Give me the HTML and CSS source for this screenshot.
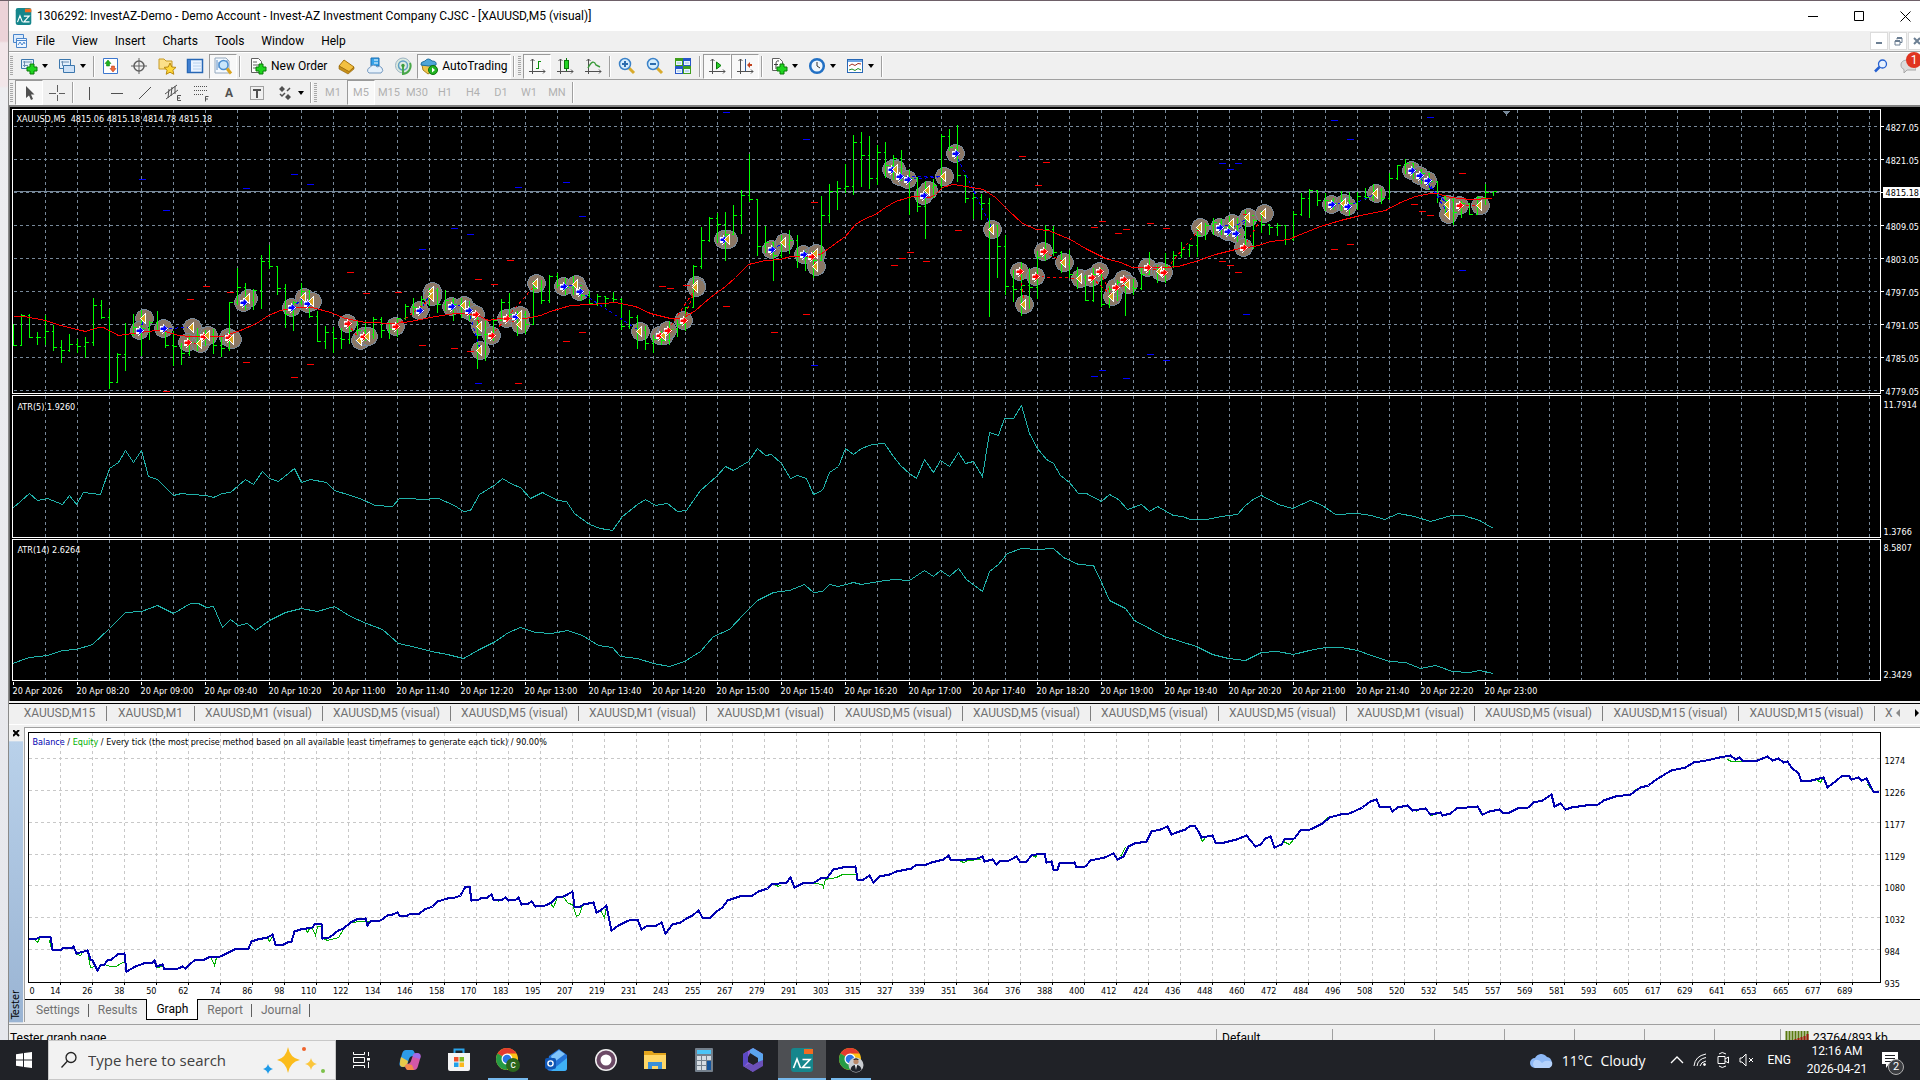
FILE: index.html
```html
<!DOCTYPE html>
<html lang="en">

<head>
    <meta charset="UTF-8">
    <meta name="viewport" content="width=device-width, initial-scale=1.0">
    <title>InvestAZ-Demo - XAUUSD,M5 (visual)</title>
    <link rel="stylesheet" href="styles.css">
</head>

<body>
    <svg class="defs" aria-hidden="true">
        <symbol id="axes" viewBox="0 0 18 18">
            <path d="M4.500 2V17M1 14.500H17M2.500 4L4.500 2L6.500 4M15 12.500L17 14.500L15 16.500" fill="none" stroke="#505050"/>
        </symbol>
        <symbol id="plus" viewBox="0 0 12 12">
            <path d="M4 1H8V4H11V8H8V11H4V8H1V4H4Z" fill="#1fd51f" stroke="#0a7a0a"/>
        </symbol>
        <symbol id="chrome" viewBox="0 0 24 24">
            <circle cx="12" cy="12" r="11" fill="#fbc116"/>
            <path d="M12 12L2.500 6.500A11 11 0 0 1 21.500 6.500H12Z" fill="#e33b2e"/>
            <path d="M2.500 6.500L12 12L12 23A11 11 0 0 1 2.500 6.500Z" fill="#259b45"/>
            <circle cx="12" cy="12" r="5.500" fill="#fff"/>
            <circle cx="12" cy="12" r="4.300" fill="#2a75e6"/>
        </symbol>
        <symbol id="az" viewBox="0 0 24 24">
            <rect x="1" width="22" height="24" rx="3" fill="#16868c"/>
            <rect x="14" y="1" width="9" height="5" fill="#f26b21"/>
            <path d="M3.500 20L7 11L10.500 20M12.500 11.500H20L12.500 19.500H20.500" fill="none" stroke="#fff" stroke-width="1.600"/>
        </symbol>
    </svg>

    <main class="desktop">
        <div class="app">
            <header class="titlebar">
                <svg class="logo" viewBox="0 0 24 24"><use href="#az"/></svg>
                <h1>1306292: InvestAZ-Demo - Demo Account - Invest-AZ Investment Company CJSC - [XAUUSD,M5 (visual)]</h1>
                <div class="win-controls">
                    <button aria-label="Minimize"><svg width="11" height="11"><path d="M0 5.500H10"/></svg></button>
                    <button aria-label="Maximize"><svg width="11" height="11"><path d="M.5.5H9.500V9.500H.5Z"/></svg></button>
                    <button aria-label="Close"><svg width="11" height="11"><path d="M.5.5L10.500 10.500M10.500.5L.5 10.500"/></svg></button>
                </div>
            </header>

            <nav class="menubar">
                <svg width="16" height="16" viewBox="0 0 16 16"><path d="M1.500 1.500H11.500V9.500H1.500Z" fill="#dcebfb" stroke="#4a86cc"/><path d="M4.500 5.500H14.500V14.500H4.500Z" fill="#eef6ff" stroke="#4a86cc"/><path d="M5 7.500H14M6 12L8 9L10 12L12 9L13 11" fill="none" stroke="#4a86cc"/></svg>
                <button>File</button>
                <button>View</button>
                <button>Insert</button>
                <button>Charts</button>
                <button>Tools</button>
                <button>Window</button>
                <button>Help</button>
                <div class="mdi-controls">
                    <button aria-label="Minimize chart"><svg width="8" height="8"><path d="M1 6H7" stroke-width="2"/></svg></button>
                    <button aria-label="Restore chart"><svg width="9" height="9"><path d="M3 2.500V1H8V5.500H6M1 4H6V8H1Z" stroke-width="1"/><path d="M3 1H8M1 4H6" stroke-width="2"/></svg></button>
                    <button aria-label="Close chart"><svg width="8" height="8"><path d="M1 1L7 7M7 1L1 7" stroke-width="2"/></svg></button>
                </div>
            </nav>

            <div class="toolbars">
                <div class="toolbar">
                    <i class="grip"></i>
                    <button class="drop" aria-label="New chart"><svg width="18" height="18" viewBox="0 0 18 18"><path d="M1.500 2.500H13.500V11.500H1.500Z" fill="#e4effb" stroke="#3c77ad"/><path d="M3 5H12M4.500 4V10M3 8.500H8" stroke="#6b8fb3"/><use href="#plus" x="6" y="6" width="12" height="12"/></svg></button>
                    <button class="drop" aria-label="Profiles"><svg width="18" height="18" viewBox="0 0 18 18"><path d="M1.500 2.500H12.500V11.500H1.500Z" fill="#e4effb" stroke="#3c77ad"/><path d="M5.500 8.500H16.500V15.500H5.500Z" fill="#cfe2f7" stroke="#3c77ad"/><path d="M3 5H11M4.500 4V9" stroke="#6b8fb3"/></svg></button>
                    <i class="sep"></i>
                    <button aria-label="Market Watch"><svg width="18" height="18" viewBox="0 0 18 18"><path d="M1.500 1.500H15.500V16.500H1.500Z" fill="#fff" stroke="#3c77cf"/><path d="M6 3L9 6.500H7.500V9H4.500V6.500H3Z" fill="#1fb31f" stroke="#0a7a0a" stroke-width=".5"/><path d="M11 15L14 11.500H12.500V9H9.500V11.500H8Z" fill="#f26b3a" stroke="#b03010" stroke-width=".5"/></svg></button>
                    <button aria-label="Data Window"><svg width="18" height="18" viewBox="0 0 18 18" fill="none" stroke="#606060"><circle cx="9" cy="9" r="5" stroke-width="1.500"/><path d="M9 1V17M1 9H17"/></svg></button>
                    <button aria-label="Navigator"><svg width="18" height="18" viewBox="0 0 18 18"><path d="M1 2H6L8 4H14V12H1Z" fill="#fbe08a" stroke="#c79a27"/><path d="M12 6L13.800 10L18 10.400L14.900 13.200L15.800 17.300L12 15.200L8.200 17.300L9.100 13.200L6 10.400L10.200 10Z" fill="#ffd83c" stroke="#b98a10"/></svg></button>
                    <button aria-label="Terminal"><svg width="18" height="18" viewBox="0 0 18 18"><rect x="1.500" y="2.500" width="15" height="13" fill="#eaf3ff" stroke="#2767b5" stroke-width="1.500"/><rect x="2" y="3" width="3" height="12" fill="#3f7fd0"/><path d="M7 6H15M7 9H15M7 12H15" stroke="#b8d2ee"/></svg></button>
                    <button class="pressed" aria-label="Strategy Tester"><svg width="20" height="20" viewBox="0 0 20 20"><path d="M2 2H13L16 5V17H2Z" fill="#f5faff" stroke="#94a8bd"/><path d="M4 4V14M6 6V12M14 4V9" stroke="#5d8ec4"/><circle cx="10.500" cy="9" r="4.500" fill="#c9e6fb" stroke="#4b8ed0" stroke-width="1.500"/><path d="M14 12.500L18 17.500" stroke="#d9a420" stroke-width="3"/></svg></button>
                    <i class="sep"></i>
                    <button class="label"><svg width="18" height="18" viewBox="0 0 18 18"><path d="M2.500 1.500H9.500L12.500 4.500V15.500H2.500Z" fill="#fff" stroke="#606060"/><path d="M4 5H8M4 8H10M4 11H8" stroke="#606060"/><use href="#plus" x="6" y="6" width="12" height="12"/></svg>New Order</button>
                    <button aria-label="MetaEditor"><svg width="18" height="18" viewBox="0 0 18 18"><path d="M6 3L16 10L11 15L1 9Z" fill="#f3c040" stroke="#a8740c"/><path d="M1 9V12L10 17L16 12V10L11 14.500Z" fill="#c8901a" stroke="#8f620a" stroke-width=".6"/></svg></button>
                    <button aria-label="MetaQuotes Cloud"><svg width="18" height="18" viewBox="0 0 18 18"><path d="M5 1H13V9H5Z" fill="#35a2e8" stroke="#1b6fb4"/><path d="M8 3H12M8 6H12" stroke="#fff"/><path d="M3 16A3 3 0 0 1 4 10.500A4 4 0 0 1 11 10A3 3 0 0 1 15 16Z" fill="#e6f1fb" stroke="#7599c0"/></svg></button>
                    <button aria-label="Signals"><svg width="18" height="18" viewBox="0 0 18 18" fill="none"><circle cx="9" cy="8.500" r="7.500" fill="#dceadf" stroke="#9cb3c4"/><circle cx="9" cy="8.500" r="4.500" stroke="#5f9fc4" stroke-width="1.500"/><path d="M9 8.500V17A8 8 0 0 0 16 6" stroke="#48a848" stroke-width="2"/><circle cx="9" cy="8.500" r="1.700" fill="#3b9a3b"/></svg></button>
                    <button class="label pressed"><svg width="18" height="18" viewBox="0 0 18 18"><path d="M2 8H15L13 14L8 17L3 13Z" fill="#f0c44c" stroke="#a8801c"/><path d="M1 8Q0 5 5 4Q8 0 12 4Q17 4 16 8Q9 10 1 8Z" fill="#4fa6d8" stroke="#21709f"/><circle cx="13" cy="13" r="4.500" fill="#21b321" stroke="#0d730d"/><path d="M12 10.500L15 13L12 15.500Z" fill="#fff"/></svg>AutoTrading</button>
                    <i class="sep"></i>
                    <i class="grip"></i>
                    <button class="pressed" aria-label="Bar chart"><svg width="18" height="18" viewBox="0 0 18 18"><use href="#axes"/><path d="M10.500 4V12M8 11.500H10M11 4.500H13" stroke="#0a8f0a"/></svg></button>
                    <button aria-label="Candlesticks"><svg width="18" height="18" viewBox="0 0 18 18"><use href="#axes"/><path d="M10.500 1V14" stroke="#0a7a0a"/><rect x="8.500" y="3.500" width="4" height="8" fill="#23d323" stroke="#0a7a0a"/></svg></button>
                    <button aria-label="Line chart"><svg width="18" height="18" viewBox="0 0 18 18"><use href="#axes"/><path d="M4 11Q9 1 12 8L16 10" fill="none" stroke="#3a9a3a" stroke-width="1.400"/></svg></button>
                    <i class="sep"></i>
                    <button aria-label="Zoom in"><svg width="18" height="18" viewBox="0 0 18 18"><path d="M11 11L16 16" stroke="#d9ab2c" stroke-width="3"/><circle cx="7" cy="7" r="5.500" fill="#d5edfd" stroke="#3b82c8" stroke-width="1.500"/><path d="M4 7H10M7 4V10" stroke="#2c6daf" stroke-width="2"/></svg></button>
                    <button aria-label="Zoom out"><svg width="18" height="18" viewBox="0 0 18 18"><path d="M11 11L16 16" stroke="#d9ab2c" stroke-width="3"/><circle cx="7" cy="7" r="5.500" fill="#d5edfd" stroke="#3b82c8" stroke-width="1.500"/><path d="M4 7H10" stroke="#2c6daf" stroke-width="2"/></svg></button>
                    <button aria-label="Tile windows"><svg width="18" height="18" viewBox="0 0 18 18"><path d="M1 1H9V9H1ZM9 9H17V17H9Z" fill="#3f9e1c"/><path d="M9 1H17V9H9ZM1 9H9V17H1Z" fill="#2656c8"/><path d="M2 4H8V8H2ZM10 4H16V8H10ZM2 12H8V16H2ZM10 12H16V16H10Z" fill="#eaf4ff"/><path d="M3 6H7M11 6H15M3 14H7M11 14H15" stroke="#9bbde0"/></svg></button>
                    <i class="sep"></i>
                    <button class="pressed" aria-label="Auto scroll"><svg width="18" height="18" viewBox="0 0 18 18"><use href="#axes"/><path d="M8.500 5V12L13 8.500Z" fill="#2bd02b" stroke="#0a7a0a"/></svg></button>
                    <button class="pressed" aria-label="Chart shift"><svg width="18" height="18" viewBox="0 0 18 18"><use href="#axes"/><path d="M9.500 2V14" stroke="#2c5d9f"/><path d="M11 8L14 5V7H16V9H14V11Z" fill="#c0401c"/></svg></button>
                    <i class="sep"></i>
                    <button class="drop" aria-label="Indicators"><svg width="18" height="18" viewBox="0 0 18 18"><path d="M2.500 1.500H9.500L12.500 4.500V13.500H2.500Z" fill="#fff" stroke="#606060"/><path d="M9 4Q6 3 6 7V12M4 7.500H8" fill="none" stroke="#404040"/><use href="#plus" x="6" y="6" width="12" height="12"/></svg></button>
                    <button class="drop" aria-label="Periods"><svg width="18" height="18" viewBox="0 0 18 18"><circle cx="9" cy="9" r="6.800" fill="#eef6fd" stroke="#2270c4" stroke-width="2.500"/><path d="M9 5V9L12 11" fill="none" stroke="#333"/></svg></button>
                    <button class="drop" aria-label="Templates"><svg width="18" height="18" viewBox="0 0 18 18"><rect x="1.500" y="2.500" width="15" height="13" fill="#fff" stroke="#2767b5"/><path d="M2 4H16" stroke="#6ea6e4" stroke-width="2"/><path d="M3 9L6 7L9 8.500L12 6.500L15 7" fill="none" stroke="#a03020"/><path d="M3 13L6 12L9 13.500L12 11.500L15 13" fill="none" stroke="#1f8f1f"/></svg></button>
                    <i class="sep"></i>
                    <div class="right-tools">
                        <button aria-label="Search"><svg width="14" height="14" viewBox="0 0 14 14"><circle cx="8.500" cy="5" r="4" fill="#e8f2ff" stroke="#2560d0" stroke-width="1.300"/><path d="M5.500 8L1 12.500" stroke="#2560d0" stroke-width="2.500"/></svg></button>
                        <button class="chat" aria-label="Messages"><svg width="16" height="16" viewBox="0 0 16 16"><path d="M8 2C3 2 1 4 1 7C1 9 2 10.500 4 11.500V15L7 12H16V2Z" fill="#dcdcdc" stroke="#a8a8a8"/></svg><span class="badge">1</span></button>
                    </div>
                </div>
                <div class="toolbar second">
                    <i class="grip"></i>
                    <button class="pressed" aria-label="Cursor"><svg width="18" height="18" viewBox="0 0 18 18"><path d="M6 2V14L9 11.500L11 16L13 15L11 10.500H14.500Z" fill="#505050"/></svg></button>
                    <button aria-label="Crosshair"><svg width="18" height="18" viewBox="0 0 18 18" stroke="#606060"><path d="M9.500 1V8M9.500 11V17M1 9.500H8M11 9.500H17"/></svg></button>
                    <i class="sep"></i>
                    <button aria-label="Vertical line"><svg width="18" height="18" viewBox="0 0 18 18"><path d="M9.500 3V16" stroke="#505050"/></svg></button>
                    <button aria-label="Horizontal line"><svg width="18" height="18" viewBox="0 0 18 18"><path d="M3 9.500H15" stroke="#505050"/></svg></button>
                    <button aria-label="Trendline"><svg width="18" height="18" viewBox="0 0 18 18"><path d="M3 15L15 3" stroke="#505050"/></svg></button>
                    <button aria-label="Channel"><svg width="18" height="18" viewBox="0 0 18 18" fill="none" stroke="#505050"><path d="M1 10L13 1M2 15L14 6M5 5L4 14M8 3L7 12M11 2V10"/><path d="M17 11.500H13.500V16.500H17M14 14H16"/></svg></button>
                    <button aria-label="Fibonacci"><svg width="18" height="18" viewBox="0 0 18 18" fill="none" stroke="#505050"><path d="M2 2.500H16M2 6.500H16M2 10.500H12" stroke-dasharray="1 1"/><path d="M16.500 12.500H13.500V17.500M14 15H16"/></svg></button>
                    <button class="glyph">A</button>
                    <button aria-label="Text label"><svg width="18" height="18" viewBox="0 0 18 18" fill="none" stroke="#505050"><path d="M2.500 2.500H15.500V15.500H2.500Z" stroke-dasharray="1 1"/><path d="M5 6H13M9 6V14" stroke-width="2"/></svg></button>
                    <button class="drop" aria-label="Arrows"><svg width="18" height="18" viewBox="0 0 18 18" fill="#505050"><path d="M6 2L9 5L6 8L3 5ZM12 10L15 13L12 16L9 13Z"/><path d="M11 7L14 4M4 10L6 12L9 9" fill="none" stroke="#505050" stroke-width="1.500"/></svg></button>
                    <i class="sep"></i>
                    <i class="grip"></i>
                    <button class="period">M1</button>
                    <button class="period pressed">M5</button>
                    <button class="period">M15</button>
                    <button class="period">M30</button>
                    <button class="period">H1</button>
                    <button class="period">H4</button>
                    <button class="period">D1</button>
                    <button class="period">W1</button>
                    <button class="period">MN</button>
                    <i class="sep"></i>
                </div>
            </div>

            <section class="chart"><svg id="priceChart"></svg></section>

            <nav class="chart-tabs">
                <button class="first">XAUUSD,M15</button>
                <button class="short">XAUUSD,M1</button>
                <button>XAUUSD,M1 (visual)</button>
                <button>XAUUSD,M5 (visual)</button>
                <button>XAUUSD,M5 (visual)</button>
                <button>XAUUSD,M1 (visual)</button>
                <button>XAUUSD,M1 (visual)</button>
                <button>XAUUSD,M5 (visual)</button>
                <button>XAUUSD,M5 (visual)</button>
                <button>XAUUSD,M5 (visual)</button>
                <button>XAUUSD,M5 (visual)</button>
                <button>XAUUSD,M1 (visual)</button>
                <button>XAUUSD,M5 (visual)</button>
                <button class="long">XAUUSD,M15 (visual)</button>
                <button class="long">XAUUSD,M15 (visual)</button>
                <button class="cut">X</button>
                <span class="scroll">
                    <svg width="5" height="8"><path d="M4 0L0 4L4 8Z" fill="#8a8a8a"/></svg>
                    <svg width="5" height="8"><path d="M0 0L4 4L0 8Z"/></svg>
                </span>
            </nav>

            <section class="tester">
                <aside>
                    <button class="close" aria-label="Close tester"><svg width="7" height="7"><path d="M0 0L6 6M6 0L0 6" stroke="#000" stroke-width="2"/></svg></button>
                    <span class="caption">Tester</span>
                </aside>
                <div class="tester-body">
                    <svg id="testerChart"></svg>
                    <nav class="tester-tabs">
                        <button>Settings</button>
                        <button>Results</button>
                        <button class="active">Graph</button>
                        <button>Report</button>
                        <button>Journal</button>
                    </nav>
                </div>
            </section>

            <footer class="statusbar">
                <span class="message">Tester graph page</span>
                <span class="profile">Default</span>
                <span class="c102"></span>
                <span class="c70"></span>
                <span class="c70"></span>
                <span class="c70"></span>
                <span class="c70"></span>
                <span class="c66"></span>
                <span class="traffic"><svg width="24" height="14"><path d="M1.500 0V14M4.500 0V14M7.500 0V14M10.500 0V14M13.500 0V14M16.500 0V14M19.500 0V14M22.500 0V14" stroke="#5a7a10" stroke-width="2"/><path d="M7.500 9V14M10.500 8V14M13.500 7V14M16.500 6V14M19.500 5V14M22.500 3V14" stroke="#a01a10" stroke-width="2"/></svg>23764/893 kb</span>
            </footer>
        </div>
    </main>

    <footer class="taskbar">
        <button class="start" aria-label="Start"><svg width="16" height="16"><path d="M0 2.300L7 1.300V7.500H0ZM8 1.100L16 0V7.500H8ZM0 8.500H7V14.700L0 13.700ZM8 8.500H16V16L8 14.900Z" fill="#fff"/></svg></button>
        <label class="search">
            <svg width="18" height="18" viewBox="0 0 18 18" fill="none" stroke="#222" stroke-width="1.300"><circle cx="11" cy="6.500" r="5"/><path d="M7.500 10L1.500 16.500"/></svg>
            <input type="text" placeholder="Type here to search" aria-label="Search">
            <svg width="62" height="28" viewBox="0 0 62 28"><path d="M25 1Q27 12 37 14Q27 16 25 27Q23 16 14 14Q23 12 25 1Z" fill="#fbbc1c"/><path d="M48 12Q49 17 54 18Q49 19 48 24Q47 19 42 18Q47 17 48 12Z" fill="#fbc63c"/><path d="M5 18Q6 22 10 23Q6 24 5 28Q4 24 0 23Q4 22 5 18Z" fill="#1f9be8"/><circle cx="41" cy="3" r="2" fill="#f0642c"/><circle cx="60" cy="25" r="2" fill="#7cc14a"/></svg>
        </label>
        <nav class="apps">
            <button aria-label="Task View"><svg width="18" height="18" viewBox="0 0 18 18" fill="none" stroke="#fff"><path d="M1.500 1V3.500H12.500V1M1.500 17V14.500H12.500V17M1.500 6.500H12.500V11.500H1.500ZM16.500 1V5M16.500 11V17"/><path d="M15 7H18V9.500H15Z" fill="#fff" stroke="none"/></svg></button>
            <button aria-label="Copilot"><svg width="24" height="24" viewBox="0 0 24 24"><path d="M8 2H14Q16 2 17 6L15 8Q12 8 11 11L9 17Q8 19 5 19Q0 19 2 13L4 6Q5 2 8 2Z" fill="#2c9be8"/><path d="M3 9L10 13L9 17Q8 19 5 19Q0 19 3 9Z" fill="#e8c94a"/><path d="M16 22H10Q8 22 7 18L9 16Q12 16 13 13L15 7Q16 5 19 5Q24 5 22 11L20 18Q19 22 16 22Z" fill="#d457a8"/><path d="M16 22H10Q8 22 7 18L9 16L14 17Z" fill="#f58a4c"/><path d="M15 7Q16 5 19 5Q24 5 22 11L15 9Z" fill="#a06be8"/></svg></button>
            <button aria-label="Store"><svg width="24" height="24" viewBox="0 0 24 24"><path d="M7.500 6V1.500H16.500V6" fill="none" stroke="#2ba4ea" stroke-width="2"/><path d="M1 5H23V21Q23 23 21 23H3Q1 23 1 21Z" fill="#f4f4f4"/><path d="M7 9H11.500V13.500H7Z" fill="#f0512a"/><path d="M12.500 9H17V13.500H12.500Z" fill="#7fba25"/><path d="M7 14.500H11.500V19H7Z" fill="#22a0e8"/><path d="M12.500 14.500H17V19H12.500Z" fill="#fbb81c"/></svg></button>
            <button class="open" aria-label="Chrome"><svg width="26" height="26" viewBox="0 0 26 26"><use href="#chrome" width="24" height="24"/><circle cx="18" cy="18" r="7" fill="#2c661d"/><text x="18" y="21">c</text></svg></button>
            <button aria-label="Outlook"><svg width="24" height="24" viewBox="0 0 24 24"><path d="M4 8L14 1L22 7V20Q22 23 19 23H6Q2 23 2 20Z" fill="#2374d8"/><path d="M6 8L14 2L20 6L8 15Z" fill="#7fc4fa"/><path d="M6 23L22 10V20Q22 23 19 23Z" fill="#3fb1f5"/><rect y="10" width="11" height="11" rx="2" fill="#0f56b5"/><circle cx="5.500" cy="15.500" r="2.600" fill="none" stroke="#fff" stroke-width="1.400"/></svg></button>
            <button aria-label="Recorder"><svg width="24" height="24" viewBox="0 0 24 24"><circle cx="12" cy="12" r="11" fill="#f2f2f2"/><circle cx="12" cy="12" r="7.500" fill="#fff" stroke="#6c4a66" stroke-width="4"/></svg></button>
            <button aria-label="File Explorer"><svg width="24" height="24" viewBox="0 0 24 24"><path d="M1 3H9L11 5H23V21H1Z" fill="#e3a51c"/><path d="M1 7H23V21H1Z" fill="#ffd766"/><path d="M5 21V14H19V21H15V18H9V21Z" fill="#3a8fd9"/></svg></button>
            <button aria-label="Calculator"><svg width="24" height="24" viewBox="0 0 24 24"><rect x="3" width="18" height="24" rx="1" fill="#74808c"/><rect x="5" y="2" width="14" height="4" fill="#4cc4f5"/><path d="M5 8H9V12H5ZM10 8H14V12H10ZM15 8H19V12H15ZM5 13H9V17H5ZM10 13H14V17H10ZM5 18H9V22H5ZM10 18H14V22H10Z" fill="#d6dde3"/><path d="M15 13H19V22H15Z" fill="#15559c"/></svg></button>
            <button aria-label="Microsoft 365"><svg width="24" height="24" viewBox="0 0 24 24"><path d="M12 0L22 6V12L12 6.500V0L2 6V18L12 24L12 17L7 14V9Z" fill="#8c62d8"/><path d="M12 0L22 6V17L17 14V10L9 5V2Z" fill="#5ba5ee"/><path d="M22 12V18L12 24L3 18.500L8 15.500L12 17L17 14Z" fill="#6b50b8"/><path d="M2 6L7 3V14L3 18.500L2 18Z" fill="#5a48c4"/></svg></button>
            <button class="open current" aria-label="InvestAZ"><svg width="24" height="24"><use href="#az"/></svg></button>
            <button class="open" aria-label="Chrome profile"><svg width="26" height="26" viewBox="0 0 26 26"><use href="#chrome" width="24" height="24"/><circle cx="18" cy="18" r="7.500" fill="#c9ccd0"/><circle cx="18" cy="14.500" r="2.600" fill="#b98868"/><path d="M15 13Q18 9.500 21 13L20 13Q18 12 16 13Z" fill="#1c1c1c"/><path d="M12.500 23Q13 18 18 18Q23 18 23.500 23Q18 27 12.500 23Z" fill="#20242c"/><path d="M17 18H19L18 23Z" fill="#fff"/></svg></button>
        </nav>
        <div class="tray">
            <button class="weather"><svg width="24" height="18" viewBox="0 0 24 18"><path d="M5 17A5 5 0 0 1 5 7A7 7 0 0 1 17 6A6 6 0 0 1 19 17Z" fill="#8db8f5"/><path d="M5 17A5 5 0 0 1 5 9Q9 8 12 12Q16 8 22 11A5 5 0 0 1 19 17Z" fill="#b5d2fb"/></svg><span>11°C</span><span>Cloudy</span></button>
            <button aria-label="Show hidden icons"><svg width="14" height="8"><path d="M1 7L7 1L13 7" fill="none" stroke="#fff" stroke-width="1.300"/></svg></button>
            <button aria-label="Network"><svg width="14" height="14" viewBox="0 0 14 14" fill="none" stroke="#fff"><path d="M1 13Q2 3 13 1M4 13Q5 6 13 4.500M7 13Q8 9 13 8"/><circle cx="11.500" cy="11.500" r="1" fill="#fff"/></svg></button>
            <button aria-label="Camera"><svg width="14" height="18" viewBox="0 0 14 18" fill="none" stroke="#fff"><path d="M3 3Q6 0 10 3M3 15Q6 18 10 15M2 5.500H9V12.500H2ZM9 8L12.500 6V12L9 10"/></svg></button>
            <button aria-label="Volume muted"><svg width="16" height="14" viewBox="0 0 16 14" fill="none" stroke="#fff"><path d="M1 5H3L7 1V13L3 9H1ZM10 5L14 9M14 5L10 9"/></svg></button>
            <button class="lang">ENG</button>
            <button class="clock"><span>12:16 AM</span><span>2026-04-21</span></button>
            <button class="notes" aria-label="Notifications"><svg width="18" height="18" viewBox="0 0 18 18"><path d="M1 1H17V13H8L5 17V13H1Z" fill="#fff"/><path d="M4 4.500H14M4 7.500H14M4 10.500H10" stroke="#202227"/></svg><span class="count">2</span></button>
        </div>
    </footer>

    <script src="script.js"></script>
</body>

</html>
```
FILE: styles.css
```css
* {
    box-sizing: border-box;
}

body {
    margin: 0;
    height: 100vh;
    display: flex;
    flex-direction: column;
    overflow: hidden;
    font-family: "Roboto", "Open Sans", sans-serif;
    font-size: 12px;
    color: #000;
    background: #e9e9ed;
}

button {
    font: inherit;
    color: inherit;
    background: none;
    border: 0;
    padding: 0;
    white-space: nowrap;
}

svg {
    display: block;
    flex: none;
}

.defs {
    position: absolute;
    width: 0;
    height: 0;
}

.desktop {
    flex: 1;
    min-height: 0;
    display: flex;
    padding-left: 8px;
    overflow: hidden;
    border-top: 1px solid #6e6068;
    background: linear-gradient(#ecd3d8 0, #ecd3d8 40px, #f2e6e9 42px, #f2e6e9 85px, #ededf0 87px, #e6e7ec 100%);
}

.app {
    flex: 1;
    min-width: 0;
    height: calc(100vh - 31px);
    display: flex;
    flex-direction: column;
    overflow: hidden;
    background: #f0f0f0;
    border-left: 1px solid #8a8a8a;
}

/* title and menu */
.titlebar {
    height: 30px;
    flex: none;
    display: flex;
    align-items: center;
    background: #fff;
    padding-left: 6px;
}

.logo {
    width: 17px;
    height: 17px;
}

.titlebar h1 {
    flex: 1;
    margin: 0 0 0 5px;
    font-size: 12px;
    font-weight: normal;
}

.win-controls {
    display: flex;
    margin-right: -8px;
}

.win-controls button {
    width: 46px;
    height: 30px;
    display: flex;
    align-items: center;
    justify-content: center;
}

.win-controls path {
    fill: none;
    stroke: #000;
}

.menubar {
    height: 20px;
    flex: none;
    display: flex;
    align-items: center;
    padding-left: 3px;
}

.menubar > button {
    padding: 0 9px 0 8px;
}

.mdi-controls {
    margin-left: auto;
    margin-right: -6px;
    display: flex;
    gap: 1px;
}

.mdi-controls button {
    width: 18px;
    height: 18px;
    display: flex;
    align-items: center;
    justify-content: center;
    background: #fff;
    border: 1px solid #dcdcdc;
}

.mdi-controls path {
    fill: none;
    stroke: #6c7f93;
}

/* toolbars */
.toolbars {
    flex: none;
    border-top: 1px solid #a0a0a0;
}

.toolbar {
    height: 27px;
    display: flex;
    align-items: center;
    border-top: 1px solid #fff;
}

.toolbar.second {
    height: 26px;
    border-top-color: #a0a0a0;
}

.toolbar > button {
    width: 28px;
    height: 25px;
    display: flex;
    align-items: center;
    justify-content: center;
}

.toolbar > button.drop {
    width: 38px;
    gap: 4px;
}

.toolbar > button.drop::after {
    content: "";
    border: 3px solid transparent;
    border-top: 4px solid #000;
    border-bottom: 0;
}

.toolbar > button.label {
    width: auto;
    gap: 4px;
    padding: 0 6px;
}

.toolbar > button.pressed {
    border: 1px solid #fff;
    border-top-color: #9a9a9a;
    border-left-color: #9a9a9a;
    background: #f8f8f8;
}

.toolbar > button.label.pressed {
    padding: 0 2px;
}

.toolbar > button.period {
    color: #b0b0b0;
    font-size: 11px;
}

.toolbar > button.glyph {
    color: #505050;
    font-weight: bold;
}

.grip {
    width: 3px;
    height: 20px;
    margin: 0 2px 0 1px;
    background: repeating-linear-gradient(#a8a8a8 0 1px, #f0f0f0 1px 2px);
}

.sep {
    width: 2px;
    height: 21px;
    margin: 0 2px;
    border-left: 1px solid #a0a0a0;
    border-right: 1px solid #fff;
}

.second .sep {
    margin: 0 1px;
}

.right-tools {
    margin-left: auto;
    display: flex;
    gap: 12px;
}

.chat {
    position: relative;
    width: 20px;
}

.badge {
    position: absolute;
    left: 6px;
    top: -6px;
    width: 16px;
    height: 16px;
    line-height: 16px;
    border-radius: 8px;
    background: #e03420;
    color: #fff;
    text-align: center;
}

/* price chart */
.chart {
    flex: 595 1 0;
    min-height: 0;
    border-left: 1px solid #696969;
    border-top: 2px solid #808080;
    background: #000;
}

.chart svg {
    width: 100%;
    height: 100%;
}

.chart text,
.tester text {
    font-family: "DejaVu Sans Condensed", "DejaVu Sans", sans-serif;
    font-size: 9px;
}

.chart text {
    fill: #fff;
}

.chart .on-white {
    fill: #000;
}

.chart-tabs {
    height: 22px;
    flex: none;
    display: flex;
    overflow: hidden;
    padding: 2px 0 3px;
    margin-top: 2px;
    border-top: 1px solid #000;
    border-bottom: 1px solid #fff;
    color: #707070;
}

.chart-tabs button {
    width: 128px;
    flex: none;
    line-height: 14px;
    border-right: 1px solid #808080;
}

.chart-tabs .first {
    width: 98px;
    padding-left: 4px;
}

.chart-tabs .short {
    width: 88px;
}

.chart-tabs .long {
    width: 136px;
}

.chart-tabs .cut {
    width: 20px;
    border: 0;
    padding-left: 10px;
    text-align: left;
}

.scroll {
    margin-left: auto;
    display: flex;
    align-items: center;
    gap: 14px;
}

/* tester */
.tester {
    flex: 296 1 0;
    min-height: 0;
    display: flex;
    margin-top: 2px;
}

.tester aside {
    width: 15px;
    flex: none;
    display: flex;
    flex-direction: column;
}

.close {
    height: 14px;
    display: flex;
    align-items: center;
    justify-content: center;
}

.caption {
    flex: 1;
    margin-right: 1px;
    writing-mode: vertical-rl;
    transform: rotate(180deg);
    line-height: 14px;
    padding-top: 3px;
    font-family: "DejaVu Sans Condensed", "DejaVu Sans", sans-serif;
    font-size: 11px;
    background: linear-gradient(#9ab4d3, #b9d1ea);
}

.tester-body {
    flex: 1;
    min-width: 0;
    display: flex;
    flex-direction: column;
    border-top: 1px solid #a0a0a0;
    border-left: 1px solid #a0a0a0;
}

.tester-body svg {
    flex: 1;
    width: 100%;
    min-height: 0;
    background: #fff;
}

.tester-tabs {
    height: 23px;
    flex: none;
    display: flex;
    align-items: flex-start;
    padding-left: 2px;
    border-top: 1px solid #000;
    color: #707070;
}

.tester-tabs button {
    position: relative;
    height: 20px;
    padding: 0 9px;
}

.tester-tabs button:not(.active)::after {
    content: "";
    position: absolute;
    right: 0;
    top: 4px;
    height: 13px;
    border-right: 1px solid #606060;
}

.tester-tabs button:nth-child(2)::after {
    display: none;
}

.tester-tabs .active {
    color: #000;
    background: #fff;
    border: 1px solid #000;
    border-top: 0;
    margin-top: -1px;
    height: 21px;
}

/* status bar, its lower part is under the taskbar */
.statusbar {
    height: 26px;
    flex: none;
    display: flex;
    margin-top: 2px;
    padding-top: 4px;
    border-top: 1px solid #a0a0a0;
    line-height: 18px;
}

.statusbar span {
    border-left: 1px solid #a0a0a0;
}

.statusbar .message {
    flex: 1;
    border: 0;
    padding-left: 1px;
}

.statusbar .profile {
    width: 116px;
    padding-left: 5px;
}

.c102 {
    width: 102px;
}

.c70 {
    width: 70px;
}

.c66 {
    width: 66px;
}

.statusbar .traffic {
    width: 140px;
    display: flex;
    gap: 4px;
    padding-left: 4px;
}

.traffic svg {
    margin-top: 2px;
}

/* taskbar */
.taskbar {
    height: 40px;
    flex: none;
    display: flex;
    position: relative;
    background: #202227;
    color: #fff;
}

.taskbar button {
    display: flex;
    align-items: center;
    justify-content: center;
}

.start {
    width: 48px;
}

.search {
    width: 288px;
    display: flex;
    align-items: center;
    padding: 0 10px 0 11px;
    background: #f2f2f2;
    border: 1px solid #c8c8c8;
}

.search input {
    flex: 1;
    min-width: 0;
    border: 0;
    outline: 0;
    background: none;
    padding: 0 0 0 10px;
    font: 15px "Open Sans", "Noto Sans", sans-serif;
}

.search input::placeholder {
    color: #404040;
    opacity: 1;
}

.apps {
    display: flex;
    gap: 1px;
    padding-left: 1px;
}

.apps button {
    width: 48px;
}

.apps text {
    font-size: 10px;
    fill: #fff;
    text-anchor: middle;
}

.apps .open {
    background: linear-gradient(#76b9ed, #76b9ed) no-repeat center bottom / 40px 2px;
}

.apps .current {
    background: linear-gradient(#76b9ed, #76b9ed) no-repeat center bottom / 48px 2px #4d4f53;
}

.tray {
    margin-left: auto;
    display: flex;
    align-items: center;
    gap: 9px;
    padding-right: 21px;
}

.weather {
    gap: 8px;
    margin-right: 16px;
    font-family: "Open Sans", "Noto Sans", sans-serif;
    font-size: 14px;
}

.tray .clock {
    width: 62px;
    margin: 0 4px 0 6px;
    flex-direction: column;
    line-height: 18px;
}

.lang {
    margin-left: 3px;
}

.notes {
    position: relative;
}

.count {
    position: absolute;
    left: 7px;
    top: 8px;
    width: 16px;
    height: 16px;
    line-height: 14px;
    border: 1px solid #b0b0b0;
    border-radius: 8px;
    background: #3a3c40;
    font-size: 11px;
    text-align: center;
}
```
FILE: script.js
```js
// bars: high, low, close; levels are thirds of a pixel down the price scale
const bars = [
    [668, 735, 734], [637, 735, 643], [639, 711, 710], [692, 732, 710], [640, 731, 691], [672, 749, 740], [715, 785, 749], [698, 752, 730],
    [713, 755, 737], [708, 770, 725], [591, 733, 613], [597, 654, 649], [622, 863, 845], [755, 846, 762], [666, 810, 700], [637, 705, 680],
    [625, 765, 683], [660, 716, 664], [630, 690, 688], [680, 741, 733], [690, 795, 737], [725, 792, 757], [700, 765, 725], [680, 750, 705],
    [685, 735, 700], [682, 759, 733], [705, 768, 742], [603, 750, 605], [500, 610, 560], [545, 625, 600], [562, 627, 568], [460, 624, 482],
    [430, 504, 497], [495, 582, 563], [548, 681, 640], [600, 690, 605], [546, 610, 572], [567, 650, 647], [630, 722, 721], [674, 744, 695],
    [676, 756, 713], [680, 744, 716], [660, 727, 690], [655, 700, 690], [660, 720, 700], [648, 714, 656], [648, 711, 690], [660, 713, 685],
    [650, 706, 652], [608, 655, 616], [589, 640, 620], [585, 630, 595], [560, 615, 570], [560, 636, 610], [567, 628, 600], [590, 660, 610],
    [590, 650, 620], [600, 660, 650], [640, 802, 700], [660, 780, 700], [650, 720, 660], [592, 660, 604], [576, 650, 640], [628, 705, 640],
    [630, 697, 670], [540, 672, 562], [535, 608, 598], [522, 605, 526], [514, 560, 555], [530, 580, 560], [525, 580, 555], [560, 600, 583],
    [569, 608, 607], [579, 614, 586], [585, 618, 592], [573, 604, 595], [590, 686, 677], [625, 684, 650], [640, 744, 690], [675, 747, 728],
    [700, 755, 715], [690, 732, 718], [660, 732, 685], [655, 707, 672], [618, 690, 619], [492, 617, 497], [378, 503, 419], [348, 423, 352],
    [334, 425, 371], [333, 480, 400], [312, 402, 344], [267, 399, 286], [160, 302, 296], [294, 465, 436], [373, 455, 425], [425, 540, 464],
    [400, 470, 430], [387, 459, 420], [402, 501, 465], [450, 510, 470], [450, 530, 480], [285, 480, 344], [249, 366, 272], [240, 327, 263],
    [190, 276, 257], [102, 282, 125], [93, 258, 164], [105, 264, 233], [132, 252, 157], [123, 230, 195], [162, 237, 175], [147, 240, 230],
    [205, 342, 235], [228, 333, 317], [240, 414, 262], [235, 290, 256], [99, 265, 107], [84, 150, 142], [72, 243, 224], [222, 306, 294],
    [276, 354, 292], [278, 357, 308], [291, 648, 375], [375, 531, 436], [402, 580, 558], [505, 602, 566], [483, 645, 553], [500, 622, 560],
    [450, 592, 470], [372, 480, 385], [375, 465, 455], [450, 515, 492], [445, 530, 522], [498, 564, 530], [520, 598, 598], [500, 602, 520],
    [500, 617, 610], [555, 621, 565], [535, 600, 545], [530, 645, 560], [533, 580, 562], [500, 566, 520], [453, 522, 500], [490, 546, 510],
    [456, 545, 498], [450, 500, 463], [423, 471, 445], [429, 467, 434], [378, 466, 403], [365, 417, 375], [350, 400, 365], [352, 402, 380],
    [345, 405, 378], [350, 423, 400], [325, 440, 345], [352, 443, 360], [330, 395, 370], [368, 400, 379], [366, 405, 374], [373, 432, 415],
    [330, 418, 340], [276, 345, 295], [264, 351, 270], [270, 315, 301], [275, 330, 300], [290, 325, 310], [270, 330, 300], [272, 345, 310],
    [272, 325, 287], [262, 297, 290], [250, 300, 270], [262, 308, 295], [215, 298, 235], [192, 238, 196], [174, 220, 190], [190, 235, 210],
    [205, 250, 220], [215, 268, 243], [240, 306, 288], [285, 345, 300], [290, 370, 335], [300, 350, 310], [306, 342, 340], [285, 342, 292],
    [250, 312, 276], [272, 285, 274]
];

// moving average: x, level
const average = [13, 646, 24, 647, 45, 660, 60, 675, 85, 691, 98, 680, 103, 680, 118, 703, 140, 695, 155, 690, 165, 692, 178, 704, 190, 708, 222, 708, 240, 688, 256, 668, 268, 643, 280, 628, 295, 620, 312, 621, 330, 636, 345, 652, 365, 666, 395, 668, 410, 662, 435, 647, 455, 638, 475, 640, 488, 658, 500, 653, 525, 653, 540, 643, 550, 631, 570, 615, 590, 610, 615, 604, 635, 618, 650, 638, 670, 652, 682, 653, 695, 630, 710, 590, 725, 558, 735, 530, 748, 492, 765, 480, 780, 475, 790, 467, 810, 466, 820, 462, 835, 428, 845, 406, 855, 372, 865, 353, 875, 340, 885, 320, 895, 302, 912, 289, 930, 290, 935, 283, 942, 262, 952, 253, 960, 254, 983, 266, 995, 290, 1008, 330, 1022, 368, 1036, 387, 1048, 389, 1070, 415, 1085, 443, 1105, 473, 1120, 485, 1132, 499, 1165, 501, 1178, 497, 1195, 482, 1215, 460, 1235, 445, 1258, 433, 1270, 423, 1288, 416, 1300, 400, 1320, 376, 1340, 359, 1360, 345, 1385, 328, 1400, 305, 1415, 288, 1430, 280, 1437, 280, 1450, 290, 1470, 298, 1492, 295];

// orders: b = buy, r = sell, y = closed
const orders = `y144,654 b139,690 b163,684 y192,681 r187,724 y200,727 r203,706 y208,705 r228,711 y232,717 b243,606 y248,594 b291,621 y304,591
b307,607 y312,603 r347,669 y360,720 r363,707 y368,708 r395,678 b419,630 y432,573 y432,588 b451,618 y464,614 b468,628 r475,640 y480,677
y480,750 r491,703 r506,652 b515,647 y520,645 y520,672 y536,549 b563,558 y576,552 b579,571 y640,692 r659,703 y664,703 r667,688 r683,660
y696,553 y696,561 b723,417 y728,417 b771,447 y784,424 b803,462 r811,468 y816,459 y816,498 b891,208 y896,207 b899,229 b907,237 b923,285
y928,270 y944,227 b955,159 y992,387 r1019,511 r1035,526 y1024,612 r1043,451 y1064,484 y1080,532 r1091,529 r1099,511 y1112,588 r1115,559
r1123,535 y1128,552 r1147,499 y1160,513 r1163,514 y1200,381 b1219,379 b1227,392 b1235,399 y1232,367 r1243,439 y1248,351 y1264,339
b1331,312 y1344,309 b1347,318 y1376,279 b1411,211 b1419,226 b1427,241 y1448,313 y1448,342 r1459,316 y1480,316`.split(/\s+/);

const links = {
    b: [[139, 690, 144, 654], [163, 684, 190, 681], [291, 621, 304, 591], [419, 630, 432, 573], [451, 618, 464, 614], [468, 628, 480, 750], [515, 647, 520, 672], [563, 558, 576, 552], [579, 571, 640, 692], [771, 447, 784, 424], [803, 462, 816, 459], [899, 229, 944, 227], [907, 237, 944, 227], [955, 159, 992, 387], [1219, 379, 1232, 367], [1227, 392, 1248, 351], [1235, 399, 1248, 351], [1331, 312, 1344, 309], [1347, 318, 1376, 279], [1411, 211, 1448, 313], [1419, 226, 1448, 313], [1427, 241, 1448, 342]],
    r: [[187, 724, 200, 727], [347, 669, 360, 720], [395, 678, 432, 590], [475, 640, 480, 677], [491, 703, 536, 549], [506, 652, 520, 672], [667, 688, 696, 561], [683, 660, 696, 553], [811, 468, 816, 498], [1019, 511, 1024, 612], [1043, 451, 1064, 484], [1035, 526, 1080, 532], [1091, 529, 1112, 588], [1099, 511, 1112, 588], [1115, 559, 1128, 552], [1147, 499, 1160, 513], [1163, 514, 1200, 381], [1243, 439, 1264, 339], [1459, 316, 1480, 316]]
};

const stops = {
    b: [[141, 238], [165, 328], [245, 265], [293, 223], [309, 253], [421, 445], [453, 382], [469, 400], [477, 847], [517, 262], [565, 247], [581, 346], [725, 37], [805, 118], [813, 793], [685, 877], [1093, 826], [1101, 808], [1117, 878], [1125, 832], [1149, 760], [1165, 778], [1245, 640], [1461, 508], [1221, 190], [1229, 208], [1237, 190], [1333, 61], [1349, 118], [1429, 52]],
    r: [[165, 871], [189, 595], [205, 556], [229, 574], [245, 784], [293, 829], [309, 790], [349, 514], [365, 577], [397, 574], [421, 733], [453, 742], [469, 751], [477, 535], [493, 550], [509, 478], [517, 847], [565, 721], [581, 694], [661, 556], [669, 562], [685, 553], [725, 616], [773, 694], [805, 640], [813, 307], [893, 493], [901, 472], [909, 454], [925, 481], [957, 388], [1021, 169], [1037, 256], [1045, 187], [1093, 379], [1101, 361], [1117, 397], [1125, 385], [1149, 367], [1165, 382], [1221, 481], [1229, 493], [1237, 514], [1245, 340], [1333, 445], [1349, 430], [1413, 313], [1421, 331], [1429, 343], [1461, 220]]
};

const atr5 = [10, 414, 24, 402, 30, 408, 38, 406, 51, 411, 56, 404, 62, 411, 68, 401, 82, 403, 89, 382, 96, 377, 102, 367, 109, 377, 115, 367, 121, 388, 128, 391, 141, 404, 148, 402, 155, 403, 168, 404, 174, 405, 181, 402, 188, 401, 200, 391, 207, 395, 214, 384, 220, 390, 227, 392, 240, 382, 246, 393, 253, 391, 266, 393, 273, 400, 286, 404, 293, 406, 306, 412, 320, 413, 326, 406, 333, 406, 345, 407, 358, 406, 371, 412, 378, 417, 384, 416, 391, 403, 404, 395, 410, 390, 418, 395, 425, 397, 433, 406, 443, 401, 455, 408, 462, 409, 469, 418, 481, 427, 490, 431, 500, 432, 508, 421, 520, 411, 527, 407, 535, 412, 545, 410, 553, 417, 560, 416, 572, 400, 585, 388, 592, 380, 599, 383, 611, 376, 618, 365, 625, 371, 630, 370, 638, 378, 645, 390, 651, 387, 658, 390, 664, 403, 671, 400, 677, 385, 684, 380, 690, 365, 697, 370, 703, 365, 712, 362, 722, 361, 729, 372, 735, 379, 742, 386, 748, 390, 755, 374, 762, 385, 768, 375, 775, 380, 782, 369, 788, 378, 795, 376, 802, 388, 808, 352, 815, 355, 820, 341, 827, 341, 834, 330, 840, 353, 847, 365, 854, 374, 860, 378, 866, 387, 873, 393, 880, 402, 887, 402, 899, 409, 906, 403, 913, 407, 920, 415, 932, 411, 938, 417, 945, 413, 958, 420, 965, 421, 972, 423, 985, 423, 997, 421, 1010, 419, 1017, 412, 1024, 406, 1030, 404, 1044, 411, 1055, 414, 1070, 408, 1080, 412, 1090, 419, 1108, 418, 1120, 420, 1130, 423, 1142, 418, 1155, 421, 1168, 425, 1185, 420, 1195, 420, 1208, 424, 1219, 431];
const atr14 = [10, 541, 24, 536, 38, 534, 51, 530, 62, 529, 75, 525, 89, 512, 102, 499, 115, 498, 128, 493, 141, 500, 155, 492, 162, 492, 168, 495, 174, 494, 181, 511, 188, 505, 194, 510, 202, 508, 208, 514, 220, 506, 233, 499, 246, 496, 259, 498, 273, 494, 286, 502, 299, 508, 312, 513, 325, 524, 340, 528, 352, 531, 365, 533, 378, 537, 391, 529, 404, 523, 415, 515, 425, 511, 437, 515, 450, 516, 463, 514, 475, 518, 488, 526, 500, 528, 506, 535, 520, 537, 533, 541, 546, 543, 559, 539, 572, 531, 582, 519, 595, 513, 608, 500, 618, 489, 631, 483, 644, 481, 657, 476, 664, 483, 671, 482, 677, 476, 684, 478, 697, 475, 703, 476, 717, 474, 729, 472, 742, 473, 755, 465, 762, 470, 768, 465, 775, 470, 782, 463, 789, 472, 802, 482, 808, 466, 815, 460, 822, 451, 834, 447, 847, 448, 860, 447, 868, 454, 880, 460, 893, 461, 900, 476, 906, 489, 919, 496, 926, 506, 938, 512, 951, 519, 964, 523, 977, 527, 990, 533, 1003, 537, 1017, 538, 1030, 532, 1043, 531, 1056, 533, 1069, 530, 1082, 528, 1095, 528, 1108, 530, 1122, 535, 1134, 539, 1147, 540, 1160, 545, 1172, 542, 1186, 547, 1200, 548, 1208, 546, 1219, 549];

// tester balance, first and second half
const balance1 = [48, 597, 60, 593, 66, 588, 82, 588, 85, 627, 100, 625, 103, 621, 118, 621, 120, 617, 124, 637, 142, 629, 147, 657, 151, 660, 158, 689, 163, 674, 170, 671, 174, 660, 182, 656, 191, 641, 203, 639, 206, 693, 220, 678, 234, 669, 248, 665, 251, 659, 255, 678, 264, 672, 268, 687, 290, 684, 298, 678, 302, 684, 308, 672, 318, 658, 334, 656, 340, 651, 360, 648, 372, 635, 382, 627, 405, 624, 410, 602, 420, 595, 436, 590, 444, 582, 449, 612, 462, 611, 468, 605, 475, 603, 480, 571, 490, 565, 510, 560, 515, 549, 524, 549, 526, 592, 538, 589, 545, 579, 552, 568, 560, 563, 572, 545, 582, 535, 596, 534, 600, 555, 605, 541, 620, 540, 632, 525, 640, 522, 648, 514, 652, 525, 665, 524, 670, 519, 684, 518, 692, 505, 706, 498, 714, 482, 730, 473, 743, 470, 752, 463, 760, 438, 766, 438, 769, 478, 782, 477, 786, 471, 796, 470, 802, 462, 806, 475, 820, 475, 824, 470, 830, 478, 842, 476, 846, 470, 851, 492, 862, 487, 868, 482, 873, 498, 890, 495, 900, 485, 908, 471, 920, 468, 926, 460, 934, 453, 938, 498, 948, 496, 952, 491, 968, 486, 973, 514, 980, 508, 990, 494, 998, 568, 1010, 553, 1022, 542, 1030, 537, 1040, 537, 1047, 567, 1056, 555, 1072, 554, 1079, 546, 1086, 577, 1098, 552, 1110, 546, 1120, 534, 1130, 523, 1140, 509, 1146, 531, 1160, 529, 1170, 512, 1180, 500, 1188, 480, 1198, 474, 1212, 465, 1228, 463, 1238, 452, 1252, 443, 1260, 431, 1284, 424, 1291, 410, 1297, 439, 1310, 427, 1330, 424, 1340, 412, 1350, 410, 1360, 385, 1375, 381, 1397, 378, 1400, 417, 1410, 415, 1420, 403, 1426, 424, 1436, 408, 1452, 401, 1464, 391, 1488, 382, 1496, 372, 1512, 371, 1520, 364, 1540, 355, 1548, 343, 1552, 356, 1568, 356];
const balance2 = [0, 506, 10, 504, 28, 501, 36, 495, 40, 512, 52, 505, 58, 522, 64, 510, 80, 507, 92, 497, 98, 514, 108, 512, 116, 492, 130, 486, 137, 486, 140, 513, 148, 510, 152, 535, 158, 535, 162, 518, 186, 514, 190, 531, 204, 528, 212, 507, 236, 500, 250, 486, 257, 505, 266, 495, 275, 466, 285, 457, 304, 450, 312, 422, 326, 416, 338, 407, 344, 430, 352, 423, 368, 415, 376, 402, 382, 402, 388, 420, 394, 438, 412, 434, 416, 453, 432, 453, 450, 445, 467, 432, 474, 448, 482, 466, 490, 461, 498, 443, 506, 437, 513, 468, 524, 461, 530, 446, 546, 441, 556, 418, 572, 416, 592, 396, 602, 378, 620, 370, 636, 367, 656, 348, 670, 330, 679, 324, 685, 346, 700, 346, 706, 361, 714, 348, 730, 342, 738, 357, 760, 351, 768, 370, 784, 363, 788, 374, 800, 366, 810, 352, 844, 345, 852, 370, 864, 360, 880, 354, 886, 363, 896, 363, 910, 352, 928, 349, 936, 334, 950, 327, 965, 311, 970, 346, 980, 336, 988, 355, 998, 349, 1020, 343, 1042, 339, 1050, 327, 1070, 317, 1094, 310, 1110, 290, 1124, 284, 1136, 265, 1150, 250, 1162, 237, 1184, 228, 1198, 214, 1218, 208, 1240, 199, 1258, 191, 1266, 205, 1272, 197, 1278, 208, 1302, 206, 1318, 195, 1326, 206, 1336, 201, 1344, 214, 1350, 210, 1358, 229, 1368, 246, 1374, 270, 1390, 267, 1410, 260, 1416, 288, 1430, 268, 1440, 252, 1450, 252, 1456, 265, 1466, 258, 1472, 268, 1480, 262, 1486, 285, 1492, 300, 1500, 300];
const equity1 = [[55, 595, 60, 606, 64, 592], [80, 600, 84, 623], [122, 637, 130, 646, 134, 634], [142, 632, 147, 682, 155, 677], [170, 672, 180, 678, 190, 679, 196, 668, 204, 664], [255, 680, 266, 678], [344, 655, 350, 674, 353, 652], [436, 590, 440, 601, 444, 588], [498, 565, 502, 575, 505, 562, 510, 562, 514, 584, 518, 557, 524, 557], [528, 594, 534, 598, 552, 590, 560, 566], [574, 545, 588, 541, 602, 541], [808, 475, 813, 481, 818, 475], [898, 488, 904, 499, 908, 475], [920, 470, 928, 487, 934, 490, 940, 526, 946, 522, 950, 494], [980, 510, 986, 530, 990, 498], [1110, 548, 1118, 534], [1264, 430, 1271, 438, 1275, 430], [1330, 428, 1342, 430, 1345, 440, 1348, 415, 1366, 409, 1376, 402, 1397, 402]];
const equity2 = [[0, 510, 6, 514, 12, 507, 34, 505], [118, 494, 122, 500, 126, 488], [262, 495, 270, 470], [392, 440, 396, 452, 400, 440], [434, 454, 440, 450], [528, 450, 538, 460, 544, 446], [590, 400, 600, 380], [738, 355, 746, 360], [768, 372, 780, 366], [850, 366, 854, 372], [1098, 305, 1106, 293], [1166, 236, 1175, 232], [1252, 203, 1260, 210, 1276, 211], [1368, 246, 1372, 264], [1398, 264, 1404, 274, 1408, 262], [1482, 280, 1490, 298]];

const times = ['2026', '08:20', '09:00', '09:40', '10:20', '11:00', '11:40', '12:20', '13:00', '13:40', '14:20', '15:00', '15:40', '16:20', '17:00', '17:40', '18:20', '19:00', '19:40', '20:20', '21:00', '21:40', '22:20', '23:00'];
const trades = [14, 26, 38, 50, 62, 74, 86, 98, 110, 122, 134, 146, 158, 170, 183, 195, 207, 219, 231, 243, 255, 267, 279, 291, 303, 315, 327, 339, 351, 364, 376, 388, 400, 412, 424, 436, 448, 460, 472, 484, 496, 508, 520, 532, 545, 557, 569, 581, 593, 605, 617, 629, 641, 653, 665, 677, 689];

const colors = { b: '#0000ff', r: '#ff0000', y: '#daa520' };

function path(d, stroke, extra = '') {
    return `<path d="${d}" fill="none" stroke="${stroke}" ${extra}/>`;
}

function text(x, y, value, extra = '') {
    return `<text x="${Math.round(x)}" y="${Math.round(y)}" ${extra}>${value}</text>`;
}

function polyline(list, fx, fy) {
    let d = '';
    for (let i = 0; i < list.length; i += 2) {
        d += (i ? 'L' : 'M') + Math.round(fx(list[i])) + ' ' + Math.round(fy(list[i + 1]));
    }
    return d;
}

function drawPriceChart() {
    const svg = document.getElementById('priceChart');
    const width = svg.clientWidth;
    const k = svg.clientHeight / 593;
    const right = width - 40;
    const X = x => x - 10;
    const Y = y => Math.round((y - 107) * k);
    const L = level => Y(100 + level / 3);
    const panels = [[109, 393], [395, 536], [538, 679]];
    let grid = '';
    let out = '';

    for (let x = X(45); x < right; x += 32) {
        panels.forEach(([top, bottom]) => grid += `M${x} ${Y(top)}V${Y(bottom)}`);
    }
    for (let y = 126; y < 393; y += 33) {
        grid += `M3 ${Y(y)}H${right}`;
    }
    out += path(grid, '#778899', 'stroke-dasharray="3 3"');
    out += path(`M3 ${Y(191)}H${right}`, '#778899');

    orders.forEach(o => {
        const [x, level] = o.slice(1).split(',').map(Number);
        out += `<circle cx="${X(x)}" cy="${L(level)}" r="9" fill="#8b7765" stroke="#778899"/>`;
    });

    let d = '';
    bars.forEach(([high, low, close], i) => {
        const x = X(13 + i * 8);
        const open = i ? bars[i - 1][2] : close;
        d += `M${x} ${L(high)}V${L(low)}M${x - 2} ${L(open)}H${x}M${x} ${L(close)}H${x + 3}`;
    });
    out += path(d, '#00ff00');

    for (const side in stops) {
        d = stops[side].map(([x, level]) => `M${X(x) - 3} ${L(level)}h7`).join('');
        out += path(d, colors[side]);
        d = links[side].map(([x1, l1, x2, l2]) => `M${X(x1)} ${L(l1)}L${X(x2)} ${L(l2)}`).join('');
        out += path(d, colors[side], 'stroke-dasharray="3 3"');
    }
    out += path(polyline(average, X, L), '#ff0000');

    orders.forEach(o => {
        const [x, level] = o.slice(1).split(',').map(Number);
        const place = `transform="translate(${X(x)} ${L(level)})"`;
        if (o[0] === 'y') {
            out += `<path d="M-4 0L1-5V5Z" ${place} fill="${colors.y}" stroke="#fff"/>`;
        } else {
            out += `<path d="M-4-3H-1V-5L5 0L-1 5V3H-4Z" ${place} fill="#fff"/>`;
            out += `<path d="M-3-1H0V-3L4 0L0 3V1H-3Z" ${place} fill="${colors[o[0]]}" stroke="${colors[o[0]]}" stroke-width=".5"/>`;
        }
    });

    const scaled = v => v * 1.2245;
    out += path(polyline(atr5, x => X(scaled(x)), y => Y(scaled(y))), '#20b2aa');
    out += path(polyline(atr14, x => X(scaled(x)), y => Y(scaled(y))), '#20b2aa');

    panels.forEach(([top, bottom]) => {
        out += path(`M2 ${Y(top)}H${right}V${Y(bottom)}H2Z`, '#fff');
    });
    out += `<path d="M${X(1501)} ${Y(110)}h9l-4 5z" fill="#778899"/>`;

    // scales
    for (let i = 0; i < 9; i++) {
        const y = Y(126 + i * 33);
        out += path(`M${right} ${y}h3`, '#fff');
        if (i !== 2) {
            out += text(right + 5, y + 4, (4827.05 - i * 6).toFixed(2));
        }
    }
    out += `<rect x="${right + 2}" y="${Y(186)}" width="40" height="11" fill="#fff"/>`;
    out += text(right + 5, Y(191) + 4, '4815.18', 'class="on-white"');
    out += text(right + 3, Y(406), '11.7914') + text(right + 3, Y(533), '1.3766');
    out += text(right + 3, Y(549), '8.5807') + text(right + 3, Y(676), '2.3429');
    times.forEach((t, i) => {
        out += path(`M${X(13 + i * 64)} ${Y(680)}v3`, '#fff');
        out += text(X(12 + i * 64), Y(692), '20 Apr ' + t);
    });
    out += text(X(16), Y(121), 'XAUUSD,M5&nbsp; 4815.06 4815.18 4814.78 4815.18');
    out += text(X(17), Y(408), 'ATR(5) 1.9260') + text(X(17), Y(551), 'ATR(14) 2.6264');

    svg.innerHTML = `<g transform="translate(.5 .5)" shape-rendering="crispEdges">${out}</g>`;
}

function drawTester() {
    const svg = document.getElementById('testerChart');
    const k = svg.clientHeight / 272;
    const right = svg.clientWidth - 40;
    const kx = right / 1855;
    const X = x => Math.round((x - 25) * kx);
    const Y = y => Math.round((y - 727) * k);
    let grid = '';
    let out = '';

    trades.forEach((t, i) => grid += `M${X(60 + i * 32)} ${Y(731)}V${Y(982)}`);
    for (let i = 0; i < 7; i++) {
        grid += `M${X(28)} ${Y(757 + i * 32)}H${right}`;
    }
    out += path(grid, '#c8c8c8', 'stroke-dasharray="3 3"');

    const x1 = x => X(x / 1.6333);
    const y1 = y => Y(740 + y / 3);
    const x2 = x => X(960 + x / 1.6333);
    const y2 = y => Y(690 + y / 3);
    out += path(equity1.map(e => polyline(e, x1, y1)).join('') + equity2.map(e => polyline(e, x2, y2)).join(''), '#00b000');
    out += path(polyline(balance1, x1, y1) + polyline(balance2, x2, y2).replace('M', 'L'), '#0000b0', 'stroke-width="2"');
    out += path(`M${X(28)} ${Y(731)}H${right}V${Y(982)}H${X(28)}Z`, '#000');

    out += text(X(29), Y(993), '0');
    trades.forEach((t, i) => {
        out += path(`M${X(60 + i * 32)} ${Y(982)}v2`, '#000');
        out += text(X(60 + i * 32), Y(993), t, 'text-anchor="end"');
    });
    [1274, 1226, 1177, 1129, 1080, 1032, 984, 935].forEach((v, i) => {
        out += text(right + 4, Y(Math.min(762 + i * 32, 986)), v);
    });
    out += text(X(32), Y(743), '<tspan fill="#0000b0">Balance</tspan> / <tspan fill="#00b000">Equity</tspan> / Every tick (the most precise method based on all available least timeframes to generate each tick) / 90.00%');

    svg.innerHTML = `<g transform="translate(.5 .5)" shape-rendering="crispEdges">${out}</g>`;
}

function draw() {
    drawPriceChart();
    drawTester();
}

window.addEventListener('resize', draw);
draw();
```
